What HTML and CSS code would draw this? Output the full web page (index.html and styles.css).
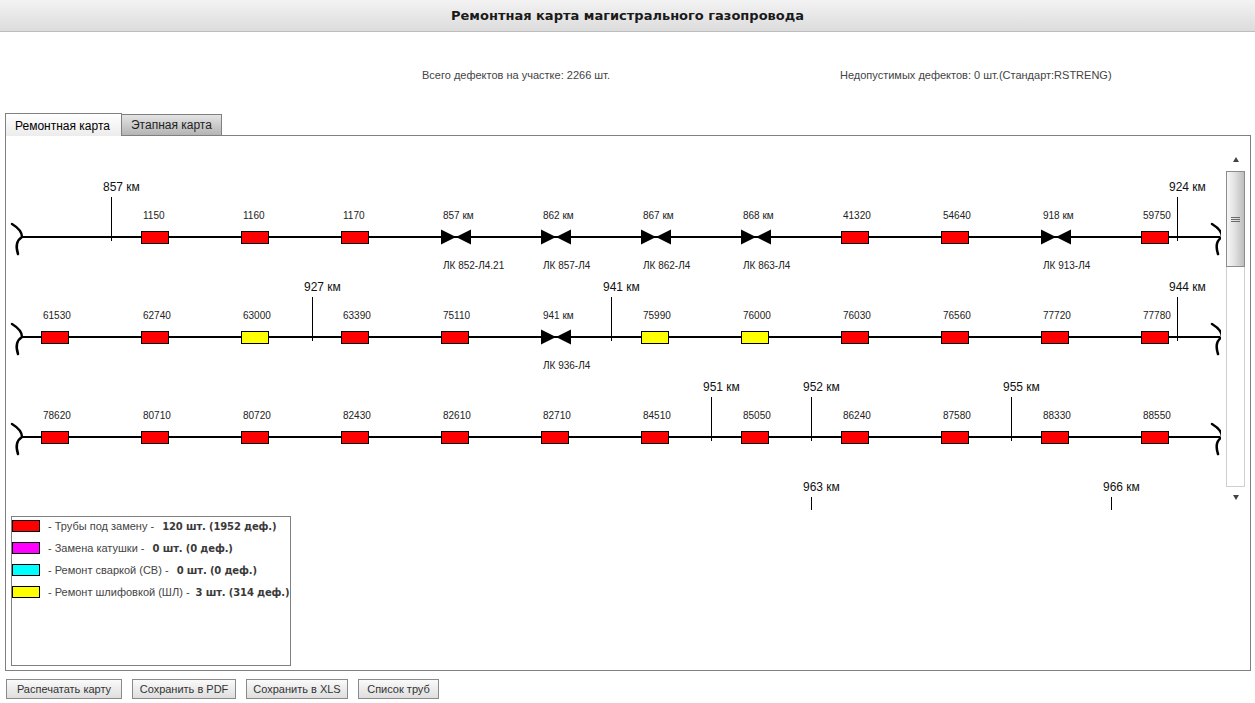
FILE: index.html
```html
<!DOCTYPE html>
<html lang="ru">
<head>
    <meta charset="UTF-8">
    <title>Ремонтная карта магистрального газопровода</title>
    <link rel="stylesheet" href="styles.css">
</head>
<body>
    <div class="title-bar">Ремонтная карта магистрального газопровода</div>
    <div class="stats">
        <span>Всего дефектов на участке: 2266 шт.</span>
        <span>Недопустимых дефектов: 0 шт.(Стандарт:RSTRENG)</span>
    </div>
    <div class="tabs">
        <div class="tab active">Ремонтная карта</div>
        <div class="tab">Этапная карта</div>
        <div class="tab-rest"></div>
    </div>
    <div class="panel">
        <div class="map-area">
            <svg id="map" class="map" width="1215" height="374" viewBox="6 136 1215 374"></svg>
            <div class="scroll">
                <div class="arrow-up"></div>
                <div class="thumb"><span></span><span></span><span></span></div>
                <div class="track"></div>
                <div class="arrow-down"></div>
            </div>
        </div>
        <div class="legend">
            <div class="legend-row"><span class="swatch red"></span>- Трубы под замену - <b>120 шт. (1952 деф.)</b></div>
            <div class="legend-row"><span class="swatch magenta"></span>- Замена катушки - <b>0 шт. (0 деф.)</b></div>
            <div class="legend-row"><span class="swatch cyan"></span>- Ремонт сваркой (СВ) - <b>0 шт. (0 деф.)</b></div>
            <div class="legend-row"><span class="swatch yellow"></span>- Ремонт шлифовкой (ШЛ) - <b>3 шт. (314 деф.)</b></div>
        </div>
    </div>
    <div class="buttons">
        <button class="btn-print">Распечатать карту</button>
        <button class="btn-pdf">Сохранить в PDF</button>
        <button class="btn-xls">Сохранить в XLS</button>
        <button class="btn-list">Список труб</button>
    </div>
    <script>
        // p - труба под замену, y - шлифовка, v - кран
        const rows = [
            { y: 237, start: 1, items: [
                ['p', '1150'], ['p', '1160'], ['p', '1170'],
                ['v', '857 км', 'ЛК 852-Л4.21'], ['v', '862 км', 'ЛК 857-Л4'],
                ['v', '867 км', 'ЛК 862-Л4'], ['v', '868 км', 'ЛК 863-Л4'],
                ['p', '41320'], ['p', '54640'], ['v', '918 км', 'ЛК 913-Л4'], ['p', '59750']
              ], km: [[111, '857 км'], [1177, '924 км']] },
            { y: 337, start: 0, items: [
                ['p', '61530'], ['p', '62740'], ['y', '63000'], ['p', '63390'], ['p', '75110'],
                ['v', '941 км', 'ЛК 936-Л4'], ['y', '75990'], ['y', '76000'],
                ['p', '76030'], ['p', '76560'], ['p', '77720'], ['p', '77780']
              ], km: [[312, '927 км'], [611, '941 км'], [1177, '944 км']] },
            { y: 437, start: 0, items: [
                ['p', '78620'], ['p', '80710'], ['p', '80720'], ['p', '82430'], ['p', '82610'], ['p', '82710'],
                ['p', '84510'], ['p', '85050'], ['p', '86240'], ['p', '87580'], ['p', '88330'], ['p', '88550']
              ], km: [[711, '951 км'], [811, '952 км'], [1011, '955 км']] },
            { y: 537, start: 0, items: [], km: [[811, '963 км'], [1111, '966 км']] }
        ];
        const fills = { p: '#ff0000', y: '#ffff00' };

        function squiggle(x, y) {
            return `<path class="end" d="M${x} ${y - 13}Q${x + 10} ${y - 7} ${x + 10} ${y}Q${x + 2} ${y + 5} ${x + 6} ${y + 17}"/>`;
        }

        let out = '';
        rows.forEach(function(row) {
            const y = row.y;
            if (row.items.length) {
                out += `<line class="pipe" x1="21" y1="${y}" x2="1220" y2="${y}"/>`;
                out += squiggle(12, y) + squiggle(1212, y);
            }
            row.items.forEach(function(item, i) {
                const x = 41 + 100 * (row.start + i);
                if (item[0] === 'v') {
                    out += `<path class="valve" d="M${x} ${y - 7.5}L${x + 15} ${y}L${x} ${y + 7.5}ZM${x + 30} ${y - 7.5}L${x + 15} ${y}L${x + 30} ${y + 7.5}Z"/>`;
                    out += `<text class="sub" x="${x + 2}" y="${y + 32}">${item[2]}</text>`;
                } else {
                    out += `<rect class="tube" x="${x + 0.5}" y="${y - 5.5}" width="27" height="12" fill="${fills[item[0]]}"/>`;
                }
                out += `<text class="tag" x="${x + 2}" y="${y - 18}">${item[1]}</text>`;
            });
            row.km.forEach(function(mark) {
                out += `<line class="tick" x1="${mark[0] + 0.5}" y1="${y - 40}" x2="${mark[0] + 0.5}" y2="${y + 4}"/>`;
                out += `<text class="km" x="${mark[0] - 8}" y="${y - 46}">${mark[1]}</text>`;
            });
        });
        document.getElementById('map').innerHTML = out;
    </script>
</body>
</html>
```

FILE: styles.css
```css
body {
    margin: 0;
    font-family: "Liberation Sans", Arial, sans-serif;
    background: #fff;
    color: #333;
}
.title-bar {
    height: 31px;
    line-height: 31px;
    text-align: center;
    font-family: "DejaVu Sans", sans-serif;
    font-size: 13px;
    font-weight: bold;
    color: #1a1a1a;
    background: linear-gradient(#f3f3f3, #dcdcdc);
    border-bottom: 1px solid #bdbdbd;
}
.stats {
    display: grid;
    grid-template-columns: 840px 1fr;
    padding-top: 36px;
    font-size: 11px;
    line-height: 14px;
    color: #444;
}
.stats span:first-child {
    padding-left: 422px;
}
.tabs {
    display: flex;
    align-items: flex-end;
    margin: 31px 4px 0 5px;
    font-size: 12px;
}
.tab {
    height: 20px;
    line-height: 20px;
    padding: 0 9px;
    border: 1px solid #808080;
    border-left: none;
    color: #222;
    background: linear-gradient(#e4e4e4, #b4b4b4);
}
.tab.active {
    height: 22px;
    line-height: 24px;
    padding: 0 11px 0 9px;
    border-left: 1px solid #808080;
    border-bottom: none;
    color: #000;
    background: linear-gradient(#fff, #ececec);
}
.tab-rest {
    flex: 1;
    border-bottom: 1px solid #808080;
}
.panel {
    height: 534px;
    margin: 0 4px 0 5px;
    border: 1px solid #808080;
    border-top: none;
}
.map-area {
    display: flex;
    height: 374px;
}
.map {
    display: block;
    flex: none;
}
.map .pipe {
    stroke: #000;
    stroke-width: 2;
}
.map .end {
    fill: none;
    stroke: #000;
    stroke-width: 2.5;
    stroke-linecap: round;
}
.map .tube {
    stroke: #000;
    stroke-width: 1;
}
.map .valve {
    fill: #000;
}
.map .tick {
    stroke: #000;
    stroke-width: 1;
}
.map text {
    font-family: "Liberation Sans", Arial, sans-serif;
}
.map .tag, .map .sub {
    font-size: 10px;
    fill: #222;
}
.map .km {
    font-size: 12px;
    fill: #111;
}
.scroll {
    width: 19px;
    margin-left: 5px;
    padding-top: 21px;
}
.arrow-up, .arrow-down {
    width: 0;
    height: 0;
    margin: 0 auto;
    border-left: 3px solid transparent;
    border-right: 3px solid transparent;
}
.arrow-up {
    border-bottom: 5px solid #444;
}
.arrow-down {
    margin-top: 8px;
    border-top: 5px solid #444;
}
.thumb {
    height: 94px;
    margin-top: 9px;
    border: 1px solid #8c8c8c;
    background: linear-gradient(to right, #f6f6f6, #e2e2e2 45%, #bdbdbd);
    display: flex;
    flex-direction: column;
    align-items: center;
    justify-content: center;
    gap: 1px;
}
.thumb span {
    width: 9px;
    height: 1px;
    background: #6a6a6a;
}
.track {
    height: 219px;
    border: 1px solid #cfcfcf;
    border-top: none;
    background: #fff;
}
.legend {
    width: 278px;
    height: 146px;
    margin: 6px 0 0 5px;
    padding-top: 2px;
    border: 1px solid #808080;
    font-size: 11px;
    color: #444;
}
.legend-row {
    display: flex;
    align-items: center;
    height: 14px;
    margin-bottom: 8px;
    white-space: pre;
}
.legend-row b {
    font-family: "DejaVu Sans", sans-serif;
    font-size: 10px;
    letter-spacing: -0.15px;
    color: #3a3a3a;
    margin-left: 5px;
}
.legend-row:last-child b {
    margin-left: 3px;
}
.swatch {
    flex: none;
    width: 26px;
    height: 10px;
    margin-right: 8px;
    border: 1px solid #000;
}
.red { background: #ff0000; }
.magenta { background: #ff00ff; }
.cyan { background: #00ffff; }
.yellow { background: #ffff00; }
.buttons {
    display: flex;
    gap: 10px;
    margin: 8px 0 0 6px;
}
button {
    height: 20px;
    padding: 0;
    font-family: "Liberation Sans", Arial, sans-serif;
    font-size: 11px;
    color: #333;
    border: 1px solid #8a8a8a;
    border-radius: 0;
    background: linear-gradient(#fafafa, #dedede);
}
.btn-print { width: 116px; }
.btn-pdf { width: 104px; }
.btn-xls { width: 102px; }
.btn-list { width: 81px; }
```
